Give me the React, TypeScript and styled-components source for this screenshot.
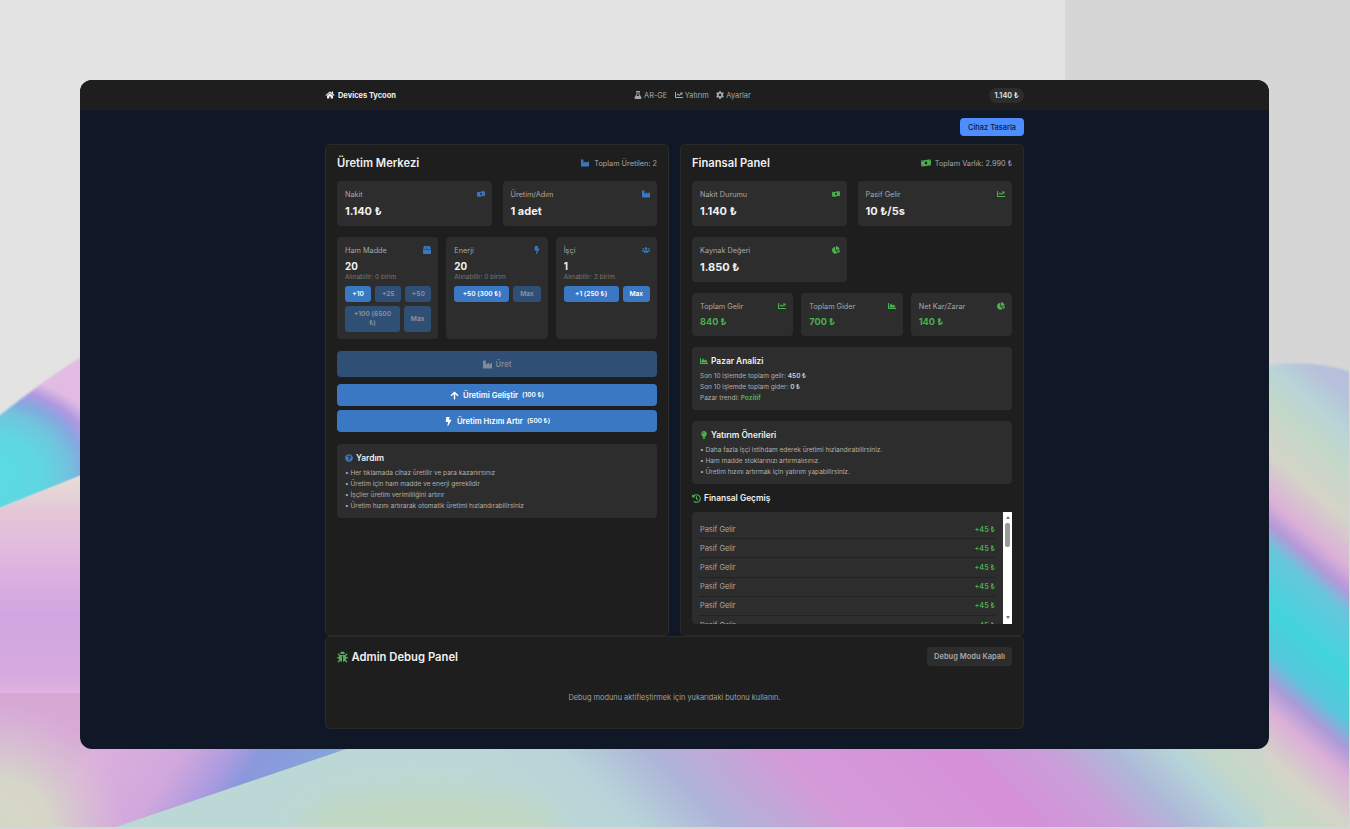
import styled, { createGlobalStyle } from "styled-components";
import {
  FaArrowUp,
  FaBolt,
  FaBox,
  FaBug,
  FaChartArea,
  FaChartLine,
  FaChartPie,
  FaCog,
  FaFlask,
  FaHistory,
  FaHome,
  FaIndustry,
  FaLightbulb,
  FaMoneyBillWave,
  FaQuestionCircle,
  FaUsers,
} from "react-icons/fa";

const BLUE = "#3b78c4";
const GREEN = "#4caf50";

const GlobalStyle = createGlobalStyle`
  html, body {
    margin: 0;
    padding: 0;
    width: 1350px;
    height: 829px;
    overflow: hidden;
    background: #e3e3e3;
    font-family: "Inter", "Noto Sans", sans-serif;
    -webkit-font-smoothing: antialiased;
  }
  * { box-sizing: border-box; }
`;

const Stage = styled.div`
  width: 1350px;
  height: 829px;
  padding: 80px 81px 80px 80px;
  position: relative;
`;

const WallpaperSvg = styled.svg`
  position: absolute;
  inset: 0;
  z-index: 0;
`;

const Wallpaper = () => (
  <WallpaperSvg width="1350" height="829" viewBox="0 0 1350 829">
    <defs>
      <clipPath id="frame">
        <rect x="0" y="0" width="1349" height="827" />
      </clipPath>
      <filter id="soft" x="-10%" y="-10%" width="120%" height="120%">
        <feGaussianBlur stdDeviation="1" />
      </filter>
      <filter id="wide" x="-30%" y="-60%" width="160%" height="220%">
        <feGaussianBlur stdDeviation="14" />
      </filter>
      <radialGradient
        id="cyan"
        gradientUnits="userSpaceOnUse"
        cx="-10"
        cy="475"
        r="100"
        gradientTransform="translate(-10 475) scale(1.25 1) translate(10 -475)"
      >
        <stop offset="0" stopColor="#58dde2" />
        <stop offset="0.42" stopColor="#60d6e0" />
        <stop offset="0.62" stopColor="#70c4de" />
        <stop offset="0.76" stopColor="#84a8e0" />
        <stop offset="0.87" stopColor="#ae98e0" />
        <stop offset="1" stopColor="#e2bbe2" />
      </radialGradient>
      <linearGradient id="lilac" gradientUnits="userSpaceOnUse" x1="0" y1="480" x2="0" y2="760">
        <stop offset="0" stopColor="#e6dcd6" />
        <stop offset="0.12" stopColor="#e4c6d8" />
        <stop offset="0.3" stopColor="#e0b4e0" />
        <stop offset="0.48" stopColor="#cfa6e0" />
        <stop offset="0.7" stopColor="#d6aae0" />
        <stop offset="0.76" stopColor="#e2b2e0" />
        <stop offset="0.76" stopColor="#d6a8d4" />
        <stop offset="1" stopColor="#d8acd8" />
      </linearGradient>
      <linearGradient id="floorLeft" gradientUnits="userSpaceOnUse" x1="60" y1="770" x2="261" y2="911">
        <stop offset="0" stopColor="#d8acd8" />
        <stop offset="0.067" stopColor="#dcb0dc" />
        <stop offset="0.37" stopColor="#d0a8dc" />
        <stop offset="0.52" stopColor="#b09ce0" />
        <stop offset="0.63" stopColor="#8a98dc" />
        <stop offset="0.87" stopColor="#84a4dc" />
        <stop offset="0.95" stopColor="#9cb8d8" />
      </linearGradient>
      <linearGradient id="floorRight" gradientUnits="userSpaceOnUse" x1="0" y1="789" x2="670" y2="119">
        <stop offset="0.35" stopColor="#bcd8d6" />
        <stop offset="0.448" stopColor="#b8d4d8" />
        <stop offset="0.514" stopColor="#aeb4d8" />
        <stop offset="0.56" stopColor="#c0a8d8" />
        <stop offset="0.61" stopColor="#d49ad8" />
        <stop offset="0.746" stopColor="#d690d8" />
        <stop offset="0.813" stopColor="#c8a0d8" />
        <stop offset="0.858" stopColor="#aeb8d8" />
        <stop offset="0.903" stopColor="#b4d4d8" />
        <stop offset="0.933" stopColor="#c4d8c8" />
        <stop offset="1" stopColor="#d4d4c8" />
      </linearGradient>
      <linearGradient id="ribbon" gradientUnits="userSpaceOnUse" x1="1310" y1="362" x2="1079" y2="632">
        <stop offset="0" stopColor="#b6c0da" />
        <stop offset="0.08" stopColor="#b8d4d8" />
        <stop offset="0.16" stopColor="#c4d8c8" />
        <stop offset="0.27" stopColor="#d4d4c8" />
        <stop offset="0.37" stopColor="#dcb0d8" />
        <stop offset="0.42" stopColor="#b498d8" />
        <stop offset="0.47" stopColor="#68c6dc" />
        <stop offset="0.6" stopColor="#42d4dc" />
        <stop offset="0.7" stopColor="#58c6dc" />
        <stop offset="0.76" stopColor="#ac9ad8" />
        <stop offset="0.82" stopColor="#dcb0d8" />
        <stop offset="0.92" stopColor="#d4d4c8" />
        <stop offset="1" stopColor="#c8d8c8" />
      </linearGradient>
      <radialGradient id="corner" gradientUnits="userSpaceOnUse" cx="0" cy="829" r="125">
        <stop offset="0" stopColor="#d5d8c6" />
        <stop offset="0.4" stopColor="#d5d6c8" />
        <stop offset="1" stopColor="#d8c4d2" stopOpacity="0" />
      </radialGradient>
    </defs>
    <path d="M1065 0H1350V829H0V693H1065Z" fill="#000" opacity="0.055" />
    <g clipPath="url(#frame)">
      <path d="M-5 419C30 392 55 372 90 352L90 472L-5 510Z" fill="url(#cyan)" filter="url(#soft)" />
      <path d="M-5 510L90 472L90 835L-5 835Z" fill="url(#lilac)" />
      <rect x="60" y="745" width="320" height="90" fill="url(#floorLeft)" />
      <rect x="0" y="700" width="130" height="130" fill="url(#corner)" />
      <rect x="470" y="745" width="885" height="90" fill="url(#floorRight)" />
      <path d="M358 745L110 829L110 835L470 835L470 745Z" fill="#bcd8d6" />
      <ellipse cx="430" cy="826" rx="130" ry="36" fill="#c2d8c2" filter="url(#wide)" />
      <path d="M1265 366Q1310 358 1355 373L1355 835L1265 835Z" fill="url(#ribbon)" filter="url(#soft)" />
    </g>
  </WallpaperSvg>
);

const Window = styled.div`
  position: relative;
  z-index: 1;
  height: 669px;
  border-radius: 12px;
  overflow: hidden;
  background: #101828;
  display: flex;
  flex-direction: column;
`;

const TopBar = styled.header`
  height: 30px;
  flex: none;
  background: #1e1e1e;
`;

const TopBarInner = styled.div`
  width: 699px;
  height: 100%;
  margin: 0 auto;
  display: flex;
  align-items: center;
  justify-content: space-between;
`;

const Brand = styled.div`
  display: flex;
  align-items: center;
  gap: 3px;
  color: #f0f0f0;
  font-size: 7.45px;
  font-weight: 700;
  svg {
    width: 10px;
    height: 8px;
  }
`;

const Nav = styled.nav`
  display: flex;
  align-items: center;
  gap: 7.5px;
`;

const NavLink = styled.span`
  display: flex;
  align-items: center;
  gap: 2px;
  color: #a8a8a8;
  font-size: 7.4px;
  svg {
    width: 8px;
    height: 8px;
  }
`;

const Balance = styled.div`
  height: 15px;
  padding: 0 5.5px;
  border-radius: 8px;
  background: #2d2d2d;
  color: #e8e8e8;
  font-size: 7.3px;
  font-weight: 600;
  display: flex;
  align-items: center;
`;

const Main = styled.main`
  width: 699px;
  margin: 0 auto;
  padding-top: 8px;
`;

const ActionRow = styled.div`
  display: flex;
  justify-content: flex-end;
  margin-bottom: 8px;
`;

const DesignButton = styled.button`
  width: 64px;
  height: 18px;
  border: 0;
  padding: 0;
  border-radius: 4px;
  background: #4d8dff;
  color: #0f1a2e;
  font: 500 7.45px "Inter", sans-serif;
`;

const Columns = styled.div`
  display: grid;
  grid-template-columns: 344px 344px;
  gap: 11px;
  height: 492px;
`;

const Panel = styled.section`
  background: #1e1e1e;
  border: 1px solid #2a2a2a;
  border-radius: 5px;
  padding: 11px;
  min-height: 0;
`;

const PanelHead = styled.div`
  height: 14px;
  margin-bottom: 11px;
  display: flex;
  align-items: center;
  justify-content: space-between;
`;

const PanelTitle = styled.h2`
  margin: 0;
  color: #f0f0f0;
  font-size: 11.2px;
  font-weight: 600;
`;

const PanelNote = styled.span<{ $tone: string }>`
  display: flex;
  align-items: center;
  gap: 4px;
  color: #a8a8a8;
  font-size: 7.3px;
  svg {
    color: ${(p) => p.$tone};
    width: 10px;
    height: 8px;
  }
`;

const Tile = styled.div`
  background: #2d2d2d;
  border-radius: 4px;
  padding: 8px 7px 8px 8px;
`;

const TileGrid = styled.div<{ $cols: number; $gap?: number; $after?: number }>`
  display: grid;
  grid-template-columns: repeat(${(p) => p.$cols}, 1fr);
  gap: ${(p) => p.$gap ?? 11}px;
  margin-bottom: ${(p) => p.$after ?? 11}px;
`;

const TileHead = styled.div<{ $tone: string }>`
  height: 10px;
  display: flex;
  align-items: center;
  justify-content: space-between;
  color: #a8a8a8;
  font-size: 7.3px;
  svg {
    color: ${(p) => p.$tone};
    width: 8px;
    height: 8px;
  }
`;

const TileValue = styled.div<{ $small?: boolean; $tone?: string }>`
  margin-top: ${(p) => (p.$small ? 4 : 5)}px;
  line-height: ${(p) => (p.$small ? 13 : 14)}px;
  color: ${(p) => p.$tone ?? "#f0f0f0"};
  font-size: ${(p) => (p.$small ? 9.2 : 11)}px;
  font-weight: 700;
`;

const Stock = styled(Tile)`
  padding-bottom: 7px;
`;

const StockValue = styled.div`
  margin-top: 5px;
  line-height: 13px;
  color: #f0f0f0;
  font-size: 9.8px;
  font-weight: 700;
`;

const StockNote = styled.div`
  line-height: 9px;
  margin-bottom: 4px;
  color: #777;
  font-size: 6.5px;
`;

const ButtonRow = styled.div`
  display: flex;
  gap: 4px;
  & + & {
    margin-top: 4px;
  }
`;

const BuyButton = styled.button<{ $off?: boolean; $grow?: number; $tall?: boolean }>`
  flex: ${(p) => p.$grow ?? 1} 1 0;
  min-width: 0;
  height: ${(p) => (p.$tall ? 26 : 16)}px;
  padding: 0;
  border: 0;
  border-radius: 3px;
  background: ${(p) => (p.$off ? "#2f4f75" : BLUE)};
  color: ${(p) => (p.$off ? "#8d96a3" : "#fff")};
  font: 600 6.6px/9px "Inter", sans-serif;
`;

const WideButton = styled.button<{ $off?: boolean; $tall?: boolean }>`
  width: 100%;
  height: ${(p) => (p.$tall ? 26 : 22)}px;
  border: 0;
  border-radius: 4px;
  display: flex;
  align-items: center;
  justify-content: center;
  gap: 4px;
  background: ${(p) => (p.$off ? "#2f4f75" : BLUE)};
  color: ${(p) => (p.$off ? "#808a98" : "#fff")};
  font: 600 7.7px "Inter", sans-serif;
  svg {
    width: 9px;
    height: 9px;
  }
  small {
    font-size: 6.5px;
    font-weight: 600;
  }
`;

const ButtonStack = styled.div`
  display: flex;
  flex-direction: column;
  gap: 4px;
  margin: 7px 0 12px;
`;

const InfoCard = styled(Tile)`
  padding-bottom: 6.5px;
  margin-bottom: 11px;
`;

const InfoTitle = styled.div<{ $tone: string }>`
  height: 12px;
  margin-bottom: 3.5px;
  display: flex;
  align-items: center;
  gap: 3px;
  color: #f0f0f0;
  font-size: 8.4px;
  font-weight: 600;
  svg {
    color: ${(p) => p.$tone};
    width: 8px;
    height: 8px;
  }
`;

const InfoLine = styled.div`
  line-height: 11px;
  color: #b0b0b0;
  font-size: 6.5px;
  b {
    font-weight: 600;
    color: #d0d0d0;
  }
  em {
    font-style: normal;
    font-weight: 700;
    color: ${GREEN};
  }
`;

const HistoryTitle = styled(InfoTitle)`
  margin: -3px 0 8px;
  svg {
    width: 9px;
    height: 9px;
  }
`;

const History = styled.div`
  display: flex;
  height: 112px;
  border-radius: 4px 0 0 4px;
  overflow: hidden;
  background: #2d2d2d;
`;

const HistoryRows = styled.div`
  flex: 1;
  padding: 8px 8px 0 7px;
  overflow: hidden;
`;

const HistoryRow = styled.div`
  height: 19.2px;
  padding-left: 1px;
  display: flex;
  align-items: center;
  justify-content: space-between;
  border-bottom: 1px solid #222;
  color: #a8a8a8;
  font-size: 7.4px;
  b {
    font-size: 7.2px;
    font-weight: 600;
    color: ${GREEN};
  }
`;

const ScrollTrack = styled.div`
  width: 9px;
  flex: none;
  background: #fff;
  display: flex;
  flex-direction: column;
  align-items: center;
  padding: 4px 0 5px;
`;

const ScrollThumb = styled.div`
  width: 5px;
  height: 24px;
  margin-top: 4px;
  border-radius: 2px;
  background: #9a9a9a;
`;

const ScrollArrow = styled.div<{ $down?: boolean }>`
  width: 0;
  height: 0;
  border-left: 2.5px solid transparent;
  border-right: 2.5px solid transparent;
  ${(p) => (p.$down ? "border-top: 3px solid #777; margin-top: auto;" : "border-bottom: 3px solid #777;")}
`;

const DebugPanel = styled(Panel)`
  height: 93px;
  padding-top: 10px;
`;

const DebugHead = styled.div`
  display: flex;
  align-items: center;
  justify-content: space-between;
`;

const DebugTitle = styled(PanelTitle)`
  display: flex;
  align-items: center;
  gap: 3.5px;
  font-size: 11.25px;
  svg {
    color: ${GREEN};
    width: 11px;
    height: 12px;
  }
`;

const DebugToggle = styled.button`
  width: 85px;
  height: 19px;
  border: 0;
  padding: 0;
  border-radius: 4px;
  background: #2d2d2d;
  color: #a8a8a8;
  font: 600 7.5px "Inter", sans-serif;
`;

const DebugNote = styled.p`
  margin: 27px 0 0;
  line-height: 10px;
  text-align: center;
  color: #a0a0a0;
  font-size: 7.38px;
`;

const StatTile = ({
  label,
  value,
  icon,
  tone,
  small,
  valueTone,
}: {
  label: string;
  value: string;
  icon: React.ReactNode;
  tone: string;
  small?: boolean;
  valueTone?: string;
}) => (
  <Tile>
    <TileHead $tone={tone}>
      {label}
      {icon}
    </TileHead>
    <TileValue $small={small} $tone={valueTone}>
      {value}
    </TileValue>
  </Tile>
);

const App = () => (
  <Stage>
    <GlobalStyle />
    <Wallpaper />
    <Window>
      <TopBar>
        <TopBarInner>
          <Brand>
            <FaHome />
            Devices Tycoon
          </Brand>
          <Nav>
            <NavLink>
              <FaFlask />
              AR-GE
            </NavLink>
            <NavLink>
              <FaChartLine />
              Yatırım
            </NavLink>
            <NavLink>
              <FaCog />
              Ayarlar
            </NavLink>
          </Nav>
          <Balance>1.140 ₺</Balance>
        </TopBarInner>
      </TopBar>
      <Main>
        <ActionRow>
          <DesignButton>Cihaz Tasarla</DesignButton>
        </ActionRow>
        <Columns>
          <Panel>
            <PanelHead>
              <PanelTitle>Üretim Merkezi</PanelTitle>
              <PanelNote $tone={BLUE}>
                <FaIndustry />
                Toplam Üretilen: 2
              </PanelNote>
            </PanelHead>
            <TileGrid $cols={2}>
              <StatTile label="Nakit" value="1.140 ₺" icon={<FaMoneyBillWave />} tone={BLUE} />
              <StatTile label="Üretim/Adım" value="1 adet" icon={<FaIndustry />} tone={BLUE} />
            </TileGrid>
            <TileGrid $cols={3} $gap={8} $after={12}>
              <Stock>
                <TileHead $tone={BLUE}>
                  Ham Madde
                  <FaBox />
                </TileHead>
                <StockValue>20</StockValue>
                <StockNote>Alınabilir: 0 birim</StockNote>
                <ButtonRow>
                  <BuyButton>+10</BuyButton>
                  <BuyButton $off>+25</BuyButton>
                  <BuyButton $off>+50</BuyButton>
                </ButtonRow>
                <ButtonRow>
                  <BuyButton $off $tall $grow={2}>
                    +100 (6500
                    <br />₺)
                  </BuyButton>
                  <BuyButton $off $tall>
                    Max
                  </BuyButton>
                </ButtonRow>
              </Stock>
              <Stock>
                <TileHead $tone={BLUE}>
                  Enerji
                  <FaBolt />
                </TileHead>
                <StockValue>20</StockValue>
                <StockNote>Alınabilir: 0 birim</StockNote>
                <ButtonRow>
                  <BuyButton $grow={2}>+50 (300 ₺)</BuyButton>
                  <BuyButton $off>Max</BuyButton>
                </ButtonRow>
              </Stock>
              <Stock>
                <TileHead $tone={BLUE}>
                  İşçi
                  <FaUsers />
                </TileHead>
                <StockValue>1</StockValue>
                <StockNote>Alınabilir: 3 birim</StockNote>
                <ButtonRow>
                  <BuyButton $grow={2}>+1 (250 ₺)</BuyButton>
                  <BuyButton>Max</BuyButton>
                </ButtonRow>
              </Stock>
            </TileGrid>
            <WideButton $off $tall>
              <FaIndustry />
              Üret
            </WideButton>
            <ButtonStack>
              <WideButton>
                <FaArrowUp />
                Üretimi Geliştir <small>(100 ₺)</small>
              </WideButton>
              <WideButton>
                <FaBolt />
                Üretim Hızını Artır <small>(500 ₺)</small>
              </WideButton>
            </ButtonStack>
            <InfoCard>
              <InfoTitle $tone={BLUE}>
                <FaQuestionCircle />
                Yardım
              </InfoTitle>
              <InfoLine>• Her tıklamada cihaz üretilir ve para kazanırsınız</InfoLine>
              <InfoLine>• Üretim için ham madde ve enerji gereklidir</InfoLine>
              <InfoLine>• İşçiler üretim verimliliğini artırır</InfoLine>
              <InfoLine>• Üretim hızını artırarak otomatik üretimi hızlandırabilirsiniz</InfoLine>
            </InfoCard>
          </Panel>
          <Panel>
            <PanelHead>
              <PanelTitle>Finansal Panel</PanelTitle>
              <PanelNote $tone={GREEN}>
                <FaMoneyBillWave />
                Toplam Varlık: 2.990 ₺
              </PanelNote>
            </PanelHead>
            <TileGrid $cols={2}>
              <StatTile label="Nakit Durumu" value="1.140 ₺" icon={<FaMoneyBillWave />} tone={GREEN} />
              <StatTile label="Pasif Gelir" value="10 ₺/5s" icon={<FaChartLine />} tone={GREEN} />
              <StatTile label="Kaynak Değeri" value="1.850 ₺" icon={<FaChartPie />} tone={GREEN} />
            </TileGrid>
            <TileGrid $cols={3} $gap={8}>
              <StatTile label="Toplam Gelir" value="840 ₺" icon={<FaChartLine />} tone={GREEN} small valueTone={GREEN} />
              <StatTile label="Toplam Gider" value="700 ₺" icon={<FaChartArea />} tone={GREEN} small valueTone={GREEN} />
              <StatTile label="Net Kar/Zarar" value="140 ₺" icon={<FaChartPie />} tone={GREEN} small valueTone={GREEN} />
            </TileGrid>
            <InfoCard>
              <InfoTitle $tone={GREEN}>
                <FaChartArea />
                Pazar Analizi
              </InfoTitle>
              <InfoLine>
                Son 10 işlemde toplam gelir: <b>450 ₺</b>
              </InfoLine>
              <InfoLine>
                Son 10 işlemde toplam gider: <b>0 ₺</b>
              </InfoLine>
              <InfoLine>
                Pazar trendi: <em>Pozitif</em>
              </InfoLine>
            </InfoCard>
            <InfoCard>
              <InfoTitle $tone={GREEN}>
                <FaLightbulb />
                Yatırım Önerileri
              </InfoTitle>
              <InfoLine>• Daha fazla işçi istihdam ederek üretimi hızlandırabilirsiniz.</InfoLine>
              <InfoLine>• Ham madde stoklarınızı artırmalısınız.</InfoLine>
              <InfoLine>• Üretim hızını artırmak için yatırım yapabilirsiniz.</InfoLine>
            </InfoCard>
            <HistoryTitle $tone={GREEN}>
              <FaHistory />
              Finansal Geçmiş
            </HistoryTitle>
            <History>
              <HistoryRows>
                {[0, 1, 2, 3, 4, 5].map((n) => (
                  <HistoryRow key={n}>
                    Pasif Gelir
                    <b>+45 ₺</b>
                  </HistoryRow>
                ))}
              </HistoryRows>
              <ScrollTrack>
                <ScrollArrow />
                <ScrollThumb />
                <ScrollArrow $down />
              </ScrollTrack>
            </History>
          </Panel>
        </Columns>
        <DebugPanel>
          <DebugHead>
            <DebugTitle>
              <FaBug />
              Admin Debug Panel
            </DebugTitle>
            <DebugToggle>Debug Modu Kapalı</DebugToggle>
          </DebugHead>
          <DebugNote>Debug modunu aktifleştirmek için yukarıdaki butonu kullanın.</DebugNote>
        </DebugPanel>
      </Main>
    </Window>
  </Stage>
);

export default App;
